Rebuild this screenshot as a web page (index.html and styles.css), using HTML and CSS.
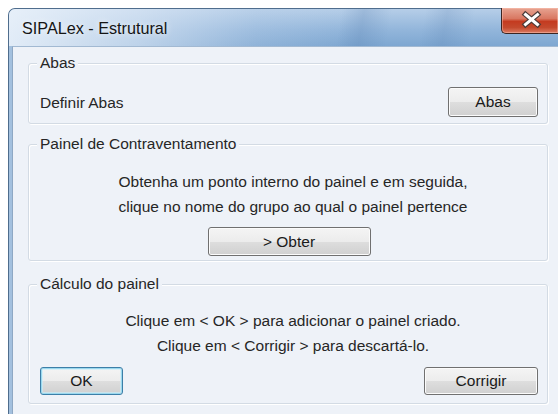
FILE: index.html
```html
<!DOCTYPE html>
<html lang="pt">
<head>
<meta charset="utf-8">
<title>SIPALex - Estrutural</title>
<link rel="stylesheet" href="styles.css">
</head>
<body>
<div class="window">
  <div class="titlebar">
    <span class="title">SIPALex - Estrutural</span>
    <button class="close" aria-label="Fechar">
      <svg width="57" height="26" viewBox="0 0 57 26">
        <path d="M23.5 7.5 L35.5 17.5 M35.5 7.5 L23.5 17.5" stroke="#4a3a38" stroke-width="5.4" stroke-linecap="square" fill="none"/>
        <path d="M23.5 7.5 L35.5 17.5 M35.5 7.5 L23.5 17.5" stroke="#ffffff" stroke-width="3" stroke-linecap="square" fill="none"/>
      </svg>
    </button>
  </div>
  <div class="client">
    <fieldset class="group group-abas">
      <legend>Abas</legend>
      <div class="row">
        <span class="label">Definir Abas</span>
        <button class="btn btn-abas">Abas</button>
      </div>
    </fieldset>
    <fieldset class="group group-painel">
      <legend>Painel de Contraventamento</legend>
      <p class="msg">Obtenha um ponto interno do painel e em seguida,<br>clique no nome do grupo ao qual o painel pertence</p>
      <div class="center">
        <button class="btn btn-obter">&gt; Obter</button>
      </div>
    </fieldset>
    <fieldset class="group group-calc">
      <legend>Cálculo do painel</legend>
      <p class="msg">Clique em &lt; OK &gt; para adicionar o painel criado.<br>Clique em &lt; Corrigir &gt; para descartá-lo.</p>
      <div class="row actions">
        <button class="btn btn-default btn-ok">OK</button>
        <button class="btn btn-corrigir">Corrigir</button>
      </div>
    </fieldset>
  </div>
</div>
</body>
</html>
```
FILE: styles.css
```css
html, body {
  margin: 0;
  height: 100%;
  overflow: hidden;
  background: #ffffff;
}

body {
  font-family: "Liberation Sans", Arial, sans-serif;
  font-size: 15.5px;
  color: #262626;
}

/* Window frame (Aero style) */
.window {
  box-sizing: border-box;
  width: 550px;
  height: calc(100% - 8px);
  margin: 8px 0 0 8px;
  border: 1px solid #4f6d8d;
  border-right: 0;
  border-bottom: 0;
  border-radius: 7px 0 0 0;
  padding-left: 3px;
  background: #a3c0de;
  display: flex;
  flex-direction: column;
}

.titlebar {
  flex: none;
  height: 37px;
  margin-left: -3px;
  padding-left: 13px;
  border-radius: 6px 0 0 0;
  display: flex;
  align-items: flex-start;
  justify-content: space-between;
  background:
    linear-gradient(to right, rgba(236, 243, 251, 0.9) 0%, rgba(222, 233, 246, 0.65) 24%, rgba(196, 215, 237, 0.25) 45%, rgba(0, 0, 0, 0) 62%),
    linear-gradient(100deg, transparent 0 60%, rgba(80, 120, 170, 0.22) 64%, transparent 69%, transparent 75%, rgba(80, 120, 170, 0.18) 79%, transparent 84%),
    linear-gradient(to bottom, #b6cee8 0%, #93b6db 55%, #7ea7d1 100%);
}

.title {
  align-self: center;
  font-size: 16.2px;
  color: #151515;
  margin-top: 1px;
  text-shadow: 0 0 6px rgba(255, 255, 255, 0.9);
}

.close {
  width: 57px;
  height: 26px;
  margin-top: -1px;
  padding: 0;
  border: 1px solid #3b2522;
  border-right: 0;
  border-top: 0;
  border-radius: 0 0 0 5px;
  background: linear-gradient(to bottom, #e7a492 0%, #d97862 42%, #c43b20 54%, #c44a2e 78%, #dc7b62 100%);
  box-shadow: inset 0 0 0 1px rgba(255, 200, 185, 0.45);
  display: block;
}

.close svg {
  display: block;
  margin-top: -1px;
}

/* Dialog client area */
.client {
  flex: 1;
  min-height: 0;
  overflow: hidden;
  background: #eef2f8;
  border-top: 1px solid #a2b9d2;
  border-left: 1px solid #8ea8c4;
  padding-top: 7px;
}

.group {
  margin: 0 10px 0 15px;
  padding: 15px 9px 6px 11px;
  border: 1px solid #d3dbe4;
  border-radius: 3px;
  box-shadow: inset 1px 1px 0 #ffffff, 1px 1px 0 #ffffff;
  min-width: 0;
}

.group legend {
  margin-left: -3px;
  padding: 0 3px;
  line-height: 18px;
  background: #eef2f8;
}

.group-painel {
  margin-top: 11px;
  padding-top: 16px;
  padding-bottom: 4px;
}

.group-calc {
  margin-top: 14px;
  padding-top: 15px;
  padding-bottom: 8px;
}

.row {
  display: flex;
  align-items: center;
  justify-content: space-between;
}

.label {
  margin-top: 1px;
}

.msg {
  margin: 0 0 0 8px;
  text-align: center;
  line-height: 25px;
}

.center {
  display: flex;
  justify-content: center;
  margin-top: 8px;
}

.actions {
  margin-top: 9px;
}

/* Push buttons */
.btn {
  font-family: inherit;
  font-size: 15.5px;
  color: #1a1a1a;
  padding: 0;
  border: 1px solid #707070;
  border-radius: 3px;
  background: linear-gradient(to bottom, #f4f4f4 0%, #ececec 50%, #dedede 50%, #d0d0d0 100%);
  box-shadow: inset 0 0 0 1px #fbfbfb;
}

.btn-abas {
  width: 90px;
  height: 30px;
}

.btn-obter {
  width: 163px;
  height: 29px;
}

.btn-ok {
  width: 83px;
  height: 28px;
}

.btn-corrigir {
  width: 114px;
  height: 28px;
}

.btn-default {
  border-color: #3c7fa8;
  box-shadow: inset 0 0 0 1px #9ad8ee, inset 0 0 0 2px rgba(200, 238, 252, 0.6);
}
```
